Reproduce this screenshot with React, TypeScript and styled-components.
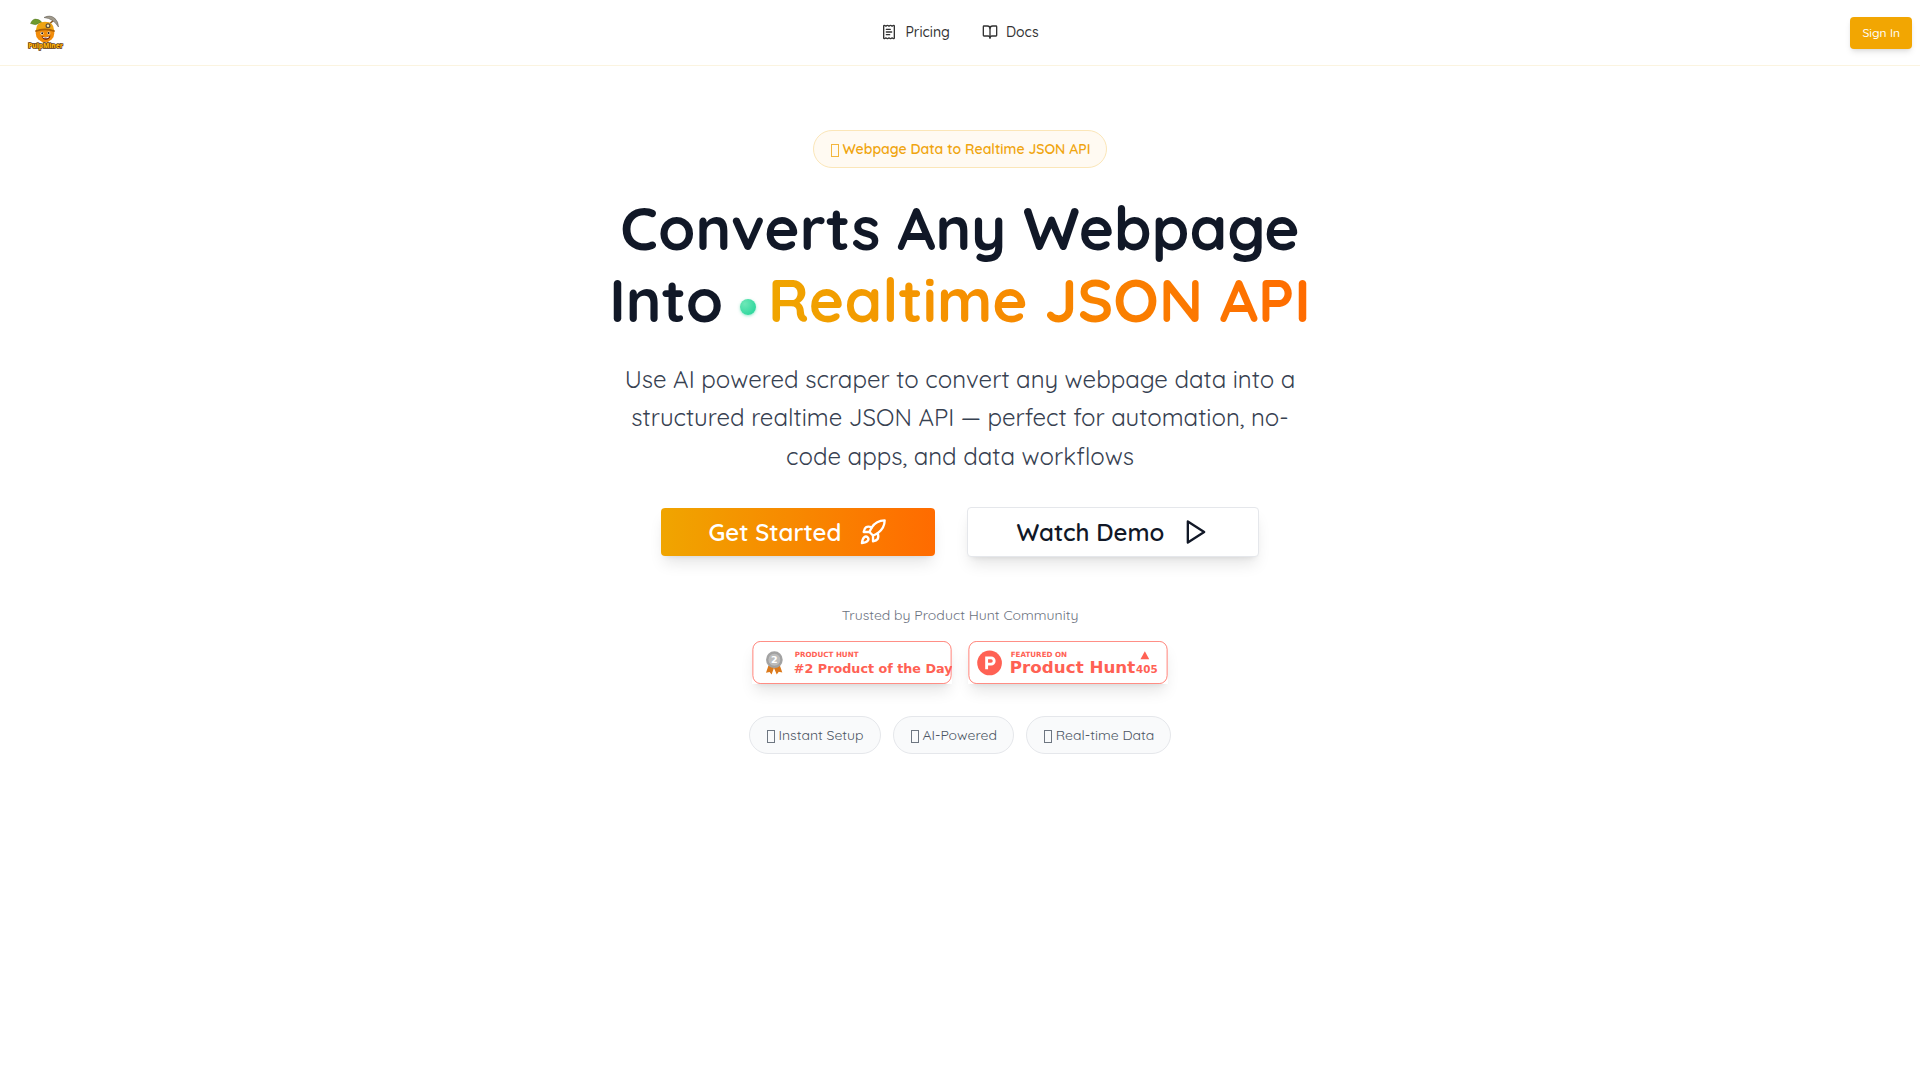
import React from "react";
import styled, { createGlobalStyle } from "styled-components";
import { BookOpen, ReceiptText, Rocket } from "lucide-react";

const GlobalStyle = createGlobalStyle`
  *, *::before, *::after { box-sizing: border-box; }
  body {
    margin: 0;
    background: #ffffff;
    color: #111827;
    font-family: Quicksand, "Open Sans", sans-serif;
  }
  h1, p, ul { margin: 0; padding: 0; }
`;

const Header = styled.header`
  display: grid;
  grid-template-columns: 1fr auto 1fr;
  align-items: center;
  height: 66px;
  padding: 0 8px 0 24px;
  border-bottom: 1px solid #fbf4e0;
`;

const LogoLink = styled.a`
  display: flex;
  justify-self: start;
`;

const Nav = styled.nav`
  display: flex;
  gap: 32px;
  /* evens out the unequal side padding of the header */
  margin-right: 16px;
  padding-bottom: 1px;
`;

const NavLink = styled.a`
  display: flex;
  align-items: center;
  gap: 8px;
  color: #333333;
  font-size: 14px;
  font-weight: 500;
  line-height: 20px;
  text-decoration: none;
`;

const SignIn = styled.button`
  justify-self: end;
  height: 32px;
  padding: 0 12px;
  border: 0;
  border-radius: 4px;
  background: #f2a602;
  color: #ffffff;
  font: 500 12px/16px Quicksand, "Open Sans", sans-serif;
  box-shadow: 0 4px 6px -1px rgba(0, 0, 0, 0.1), 0 2px 4px -2px rgba(0, 0, 0, 0.1);
`;

const Hero = styled.main`
  display: flex;
  flex-direction: column;
  align-items: center;
  max-width: 768px;
  margin: 0 auto;
  padding: 64px 16px;
  text-align: center;
`;

const Pill = styled.span<{ $accent?: boolean }>`
  display: inline-block;
  padding: 8px 16px;
  border: 1px solid ${(p) => (p.$accent ? "#fbe6b8" : "#e5e7eb")};
  border-radius: 19px;
  background: ${(p) => (p.$accent ? "#fffaf2" : "#f9fafb")};
  color: ${(p) => (p.$accent ? "#f0a50f" : "#4b5563")};
  font-size: 14px;
  font-weight: ${(p) => (p.$accent ? 600 : 400)};
  line-height: 20px;
`;

const Glyph = styled.span`
  display: inline-block;
  width: 8px;
  height: 13px;
  margin-left: 1px;
  border: 1px solid currentColor;
  opacity: 0.8;
  vertical-align: -3px;
`;

const Title = styled.h1`
  margin-top: 24px;
  font-size: 60px;
  font-weight: 700;
  line-height: 72px;
`;

const LiveDot = styled.span`
  display: inline-block;
  width: 16px;
  height: 16px;
  margin-right: 12px;
  border-radius: 50%;
  background: radial-gradient(circle at 30% 30%, #6ee7b7, #34d9a0 70%);
  box-shadow: 0 1px 3px rgba(52, 211, 153, 0.5);
  vertical-align: 7px;
`;

const Gradient = styled.span`
  background: linear-gradient(90deg, #f0a500, #ff6b00);
  background-clip: text;
  -webkit-background-clip: text;
  color: transparent;
`;

const Lead = styled.p`
  max-width: 700px;
  margin-top: 24px;
  color: #374151;
  font-size: 24px;
  line-height: 1.6;
`;

const Actions = styled.div`
  display: flex;
  flex-wrap: wrap;
  align-items: center;
  justify-content: center;
  gap: 32px;
  margin-top: 32px;
`;

const ActionButton = styled.button<{ $primary?: boolean }>`
  display: flex;
  align-items: center;
  gap: 18px;
  padding: 9px 48px;
  border: ${(p) => (p.$primary ? "0" : "1px solid #e5e7eb")};
  border-radius: 4px;
  background: ${(p) => (p.$primary ? "linear-gradient(90deg, #f0a500, #ff6b00)" : "#ffffff")};
  color: ${(p) => (p.$primary ? "#ffffff" : "#111827")};
  font: 600 24px/30px Quicksand, "Open Sans", sans-serif;
  box-shadow: 0 10px 15px -3px rgba(0, 0, 0, 0.1), 0 4px 6px -4px rgba(0, 0, 0, 0.1);
`;

const Trusted = styled.p`
  margin-top: 48px;
  color: #6b7280;
  font-size: 14px;
  line-height: 20px;
`;

const Awards = styled.div`
  display: flex;
  flex-wrap: wrap;
  justify-content: center;
  gap: 16px;
  margin-top: 16px;
`;

const AwardLink = styled.a`
  display: flex;
  height: 43px;
  box-shadow: 0 10px 15px -3px rgba(0, 0, 0, 0.1), 0 4px 6px -4px rgba(0, 0, 0, 0.1);
`;

const Features = styled.ul`
  display: flex;
  flex-wrap: wrap;
  justify-content: center;
  gap: 12px;
  margin-top: 32px;
  list-style: none;
`;

const coral = "#ff6154";
const badgeFont = '"DejaVu Sans", sans-serif';

function Logo() {
  return (
    <svg width="40" height="40" viewBox="24 12 40 40" role="img" aria-label="PulpMiner">
      <path d="M46 26L55 18" stroke="#8a5a24" strokeWidth="1.6" />
      <path d="M44 16.5Q50 13.5 54.5 17Q58.500 20.500 58.500 26Q55.500 21.500 52.500 19.500Q49 17 44 16.500Z" fill="#a09a8c" stroke="#59534a" strokeWidth="0.5" />
      <path d="M43 23Q40 17.500 35 18Q32 18.500 30.500 22.500Q36 25 39.500 22Q41.500 21.500 43 23Z" fill="#6f9a2e" stroke="#4a6a1c" strokeWidth="0.4" />
      <circle cx="45" cy="32" r="9.300" fill="#f28c0a" />
      <path d="M36 29Q36 21 45 20.800Q54 21 54 29Z" fill="#eda312" />
      <path d="M35 29.500Q45 25.500 55 29.500L54.500 31Q45 27.500 35.500 31Z" fill="#a85f06" />
      <circle cx="48" cy="24.800" r="2.500" fill="#5f5038" />
      <circle cx="48" cy="24.800" r="1.200" fill="#f6e8b8" />
      <circle cx="42" cy="32.300" r="1.500" fill="#fff" />
      <circle cx="48.800" cy="31.900" r="1.500" fill="#fff" />
      <circle cx="42.200" cy="32.300" r="1" fill="#2b1606" />
      <circle cx="48.600" cy="32" r="1" fill="#2b1606" />
      <path d="M41.500 35Q46 37.500 50.500 34.500Q49.500 38.800 45.800 38.800Q42.500 38.500 41.500 35Z" fill="#6b1f08" />
      <path d="M42.500 35.700Q46 37.300 49.500 35.300L48.500 36.700Q46 37.700 43 36.700Z" fill="#fff" />
      <text
        x="45.500"
        y="46.500"
        textAnchor="middle"
        fontFamily='"Open Sans", sans-serif'
        fontWeight="800"
        fontSize="6.500"
        fill="#f8b010"
        stroke="#5a3209"
        strokeWidth="1.300"
        paintOrder="stroke"
      >
        PulpMiner
      </text>
    </svg>
  );
}

function PlayIcon() {
  return (
    <svg
      width="28"
      height="28"
      viewBox="0 0 24 24"
      fill="none"
      stroke="currentColor"
      strokeWidth="2"
      strokeLinecap="round"
      strokeLinejoin="round"
      aria-hidden="true"
    >
      <path d="M5 3L19 12L5 21Z" />
    </svg>
  );
}

function ProductOfTheDay() {
  return (
    <svg width="200" height="43" viewBox="0 0 250 54" role="img" aria-label="#2 Product of the Day">
      <rect width="250" height="54" fill="#fff" />
      <rect x="0.500" y="0.500" width="249" height="53" rx="10" fill="#fff" stroke={coral} />
      <path d="M20 31L17 40L21.500 39L24 42L27 34L30.500 42L33 38.500L37.500 39.500L34.500 31Z" fill="#dc7a1c" />
      <circle cx="27.500" cy="23.500" r="10.500" fill="#a3a3a3" />
      <circle cx="27.500" cy="23.500" r="8" fill="#bcbcbc" stroke="#949494" strokeWidth="0.600" />
      <g fontFamily={badgeFont} fontWeight="700" fill={coral}>
        <text x="27.500" y="28" fontSize="12" textAnchor="middle" fill="#fff">2</text>
        <text x="53" y="20" fontSize="9">PRODUCT HUNT</text>
        <text x="52" y="40" fontSize="16">#2 Product of the Day</text>
      </g>
    </svg>
  );
}

function FeaturedOn() {
  return (
    <svg width="200" height="43" viewBox="0 0 250 54" role="img" aria-label="Featured on Product Hunt, 405 upvotes">
      <rect width="250" height="54" fill="#fff" />
      <rect x="0.500" y="0.500" width="249" height="53" rx="10" fill="#fff" stroke={coral} />
      <circle cx="26.500" cy="27.500" r="15.500" fill={coral} />
      <path
        d="M21 19.500H28.500A5.600 5.600 0 0 1 28.500 30.700H24.600V35.500H21ZM24.600 23V27.200H28.400A2.100 2.100 0 0 0 28.400 23Z"
        fill="#fff"
        fillRule="evenodd"
      />
      <path d="M221.500 13L227 23H216Z" fill={coral} />
      <g fontFamily={badgeFont} fontWeight="700" fill={coral}>
        <text x="53" y="20" fontSize="9">FEATURED ON</text>
        <text x="52" y="40" fontSize="21">Product Hunt</text>
        <text x="224" y="40" fontSize="13" textAnchor="middle">405</text>
      </g>
    </svg>
  );
}

const features = ["Instant Setup", "AI-Powered", "Real-time Data"];

export default function App() {
  return (
    <>
      <GlobalStyle />
      <Header>
        <LogoLink href="#">
          <Logo />
        </LogoLink>
        <Nav>
          <NavLink href="#pricing">
            <ReceiptText size={16} />
            Pricing
          </NavLink>
          <NavLink href="#docs">
            <BookOpen size={16} />
            Docs
          </NavLink>
        </Nav>
        <SignIn type="button">Sign In</SignIn>
      </Header>
      <Hero>
        <Pill $accent>
          <Glyph aria-hidden="true" /> Webpage Data to Realtime JSON API
        </Pill>
        <Title>
          Converts Any Webpage Into <LiveDot aria-hidden="true" />
          <Gradient>Realtime JSON API</Gradient>
        </Title>
        <Lead>
          Use AI powered scraper to convert any webpage data into a structured realtime JSON API — perfect
          for automation, no-code apps, and data workflows
        </Lead>
        <Actions>
          <ActionButton type="button" $primary>
            Get Started
            <Rocket size={28} />
          </ActionButton>
          <ActionButton type="button">
            Watch Demo
            <PlayIcon />
          </ActionButton>
        </Actions>
        <Trusted>Trusted by Product Hunt Community</Trusted>
        <Awards>
          <AwardLink href="#product-of-the-day">
            <ProductOfTheDay />
          </AwardLink>
          <AwardLink href="#featured">
            <FeaturedOn />
          </AwardLink>
        </Awards>
        <Features>
          {features.map((name) => (
            <li key={name}>
              <Pill>
                <Glyph aria-hidden="true" /> {name}
              </Pill>
            </li>
          ))}
        </Features>
      </Hero>
    </>
  );
}
